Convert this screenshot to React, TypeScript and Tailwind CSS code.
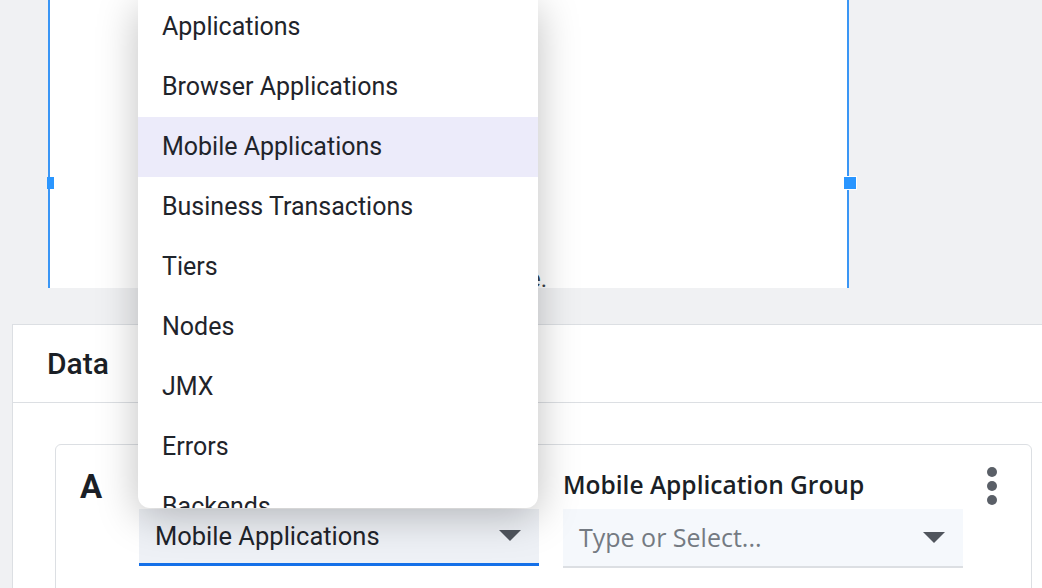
import React from "react";

const items = ["Applications","Browser Applications","Mobile Applications","Business Transactions","Tiers","Nodes","JMX","Errors","Backends"];

export default function App() {
  return (
    <div className="relative w-[1042px] h-[588px] overflow-hidden bg-[#f0f1f3]" style={{ fontFamily: "Roboto, 'Liberation Sans', sans-serif" }}>
      <div className="h-[288px] pl-[48px] flex">
        <div className="relative w-[801px] h-full bg-white border-l-2 border-r-2 border-[#3a96f5] overflow-hidden">
          <div className="absolute left-[478px] top-[264px] text-[24px] leading-[30px] text-[#3a3f47]">e.</div>
        </div>
      </div>
      <div className="absolute left-[47px] top-[177px] w-[7px] h-[12px] bg-[#2a96ff]" />
      <div className="absolute left-[843px] top-[176px] w-[14px] h-[14px] bg-[#2a96ff] border border-white" />
      <div className="mt-[36px] ml-[12px] bg-white border-t border-l border-[#dcdfe3] h-[264px]">
        <div className="h-[78px] border-b border-[#dcdfe3] flex items-center pl-[34px] text-[30px] font-medium text-[#1b1f26]">Data</div>
        <div className="pt-[41px] pl-[42px] pr-[10px]">
          <div className="h-[200px] border border-[#dcdfe3] rounded-[6px] flex pt-[20px] pl-[24px]">
            <div className="w-[59px] text-[33px] font-bold text-[#1b1f26] leading-[44px]">A</div>
            <div className="w-[400px] mt-[44px] h-[57px] bg-[#eef1f6] border-b-[3px] border-[#1570e8] flex items-center justify-between pl-[16px] pr-[18px]">
              <span className="text-[25.5px] text-[#1f242b]">Mobile Applications</span>
              <svg width="22" height="12" viewBox="0 0 22 12"><path d="M0 0h22L11 11z" fill="#50555d" /></svg>
            </div>
            <div className="ml-[24px] w-[400px]">
              <div className="text-[24.5px] font-semibold text-[#1b1f26] leading-[40px] mt-[0px]" style={{ fontFamily: "'Open Sans', sans-serif" }}>Mobile Application Group</div>
              <div className="h-[59px] mt-[4px] bg-[#f5f8fc] border-b-2 border-[#dcdfe3] flex items-center justify-between pl-[16px] pr-[18px]">
                <span className="text-[25px] text-[#747a82]" style={{ fontFamily: "'Open Sans', sans-serif" }}>Type or Select...</span>
                <svg width="22" height="12" viewBox="0 0 22 12"><path d="M0 0h22L11 11z" fill="#50555d" /></svg>
              </div>
            </div>
            <div className="ml-[24px] flex flex-col gap-[4px] pt-[2px]">
              <div className="w-[10px] h-[10px] rounded-full bg-[#5a5f67]" />
              <div className="w-[10px] h-[10px] rounded-full bg-[#5a5f67]" />
              <div className="w-[10px] h-[10px] rounded-full bg-[#5a5f67]" />
            </div>
          </div>
        </div>
      </div>
      <div className="absolute left-[138px] top-0 w-[400px] h-[508px] bg-white rounded-b-[12px] overflow-hidden shadow-[0_8px_40px_rgba(0,0,0,0.25)]">
        <div className="-mt-[3px]">
          {items.map((t, i) => (
            <div key={t} className={`h-[60px] flex items-center pl-[24px] text-[25px] text-[#1f242b] ${i === 2 ? "bg-[#ecebfa]" : ""}`}>{t}</div>
          ))}
        </div>
      </div>
    </div>
  );
}
